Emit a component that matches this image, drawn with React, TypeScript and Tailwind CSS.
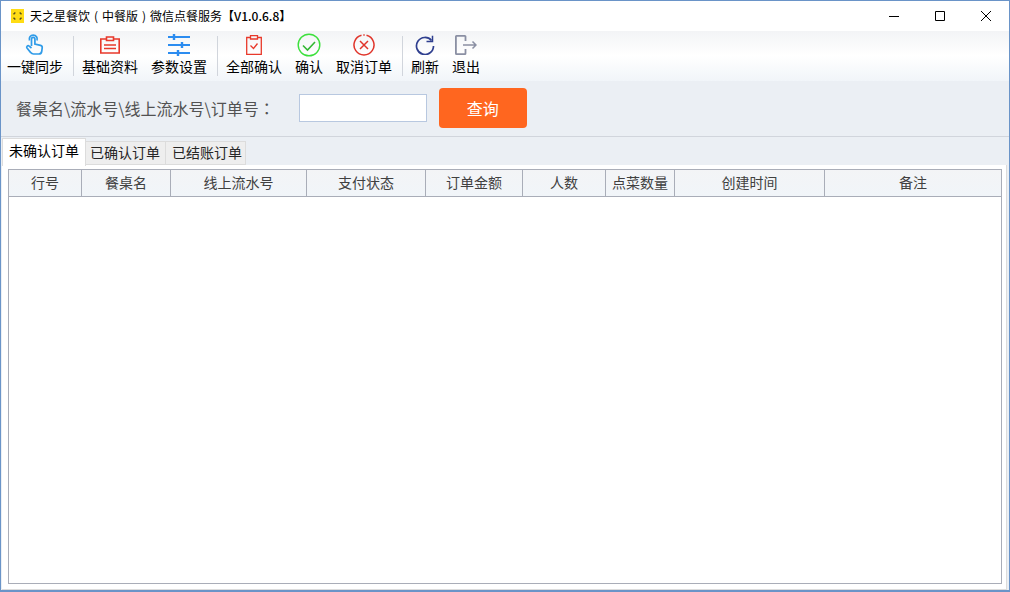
import type { ReactNode } from "react"

const headers = ["行号", "餐桌名", "线上流水号", "支付状态", "订单金额", "人数", "点菜数量", "创建时间", "备注"]

// brackets sit in the middle of a full character cell in the screenshot
function Paren({ children }: { children: ReactNode }) {
  return <span className="inline-block w-3 text-center">{children}</span>
}

function ToolButton({ icon, label }: { icon: ReactNode; label: string }) {
  return (
    <button type="button" className="flex flex-col items-center px-1.5 text-sm leading-5 text-black">
      <span className="flex h-5 w-6 items-center justify-center">{icon}</span>
      <span className="mt-px">{label}</span>
    </button>
  )
}

function Separator() {
  return <div className="mr-px mt-px h-10 w-1 border-r border-gray-300" />
}

function HandIcon() {
  return (
    <svg width="20" height="22" viewBox="0 0 20 22" fill="none" stroke="#2f9be8" strokeWidth="1.700" className="shrink-0">
      <path d="M4.500 6.500a4 4 0 1 1 7.500 0" />
      <path d="M6.500 12V5a1.700 1.700 0 0 1 3.400 0v5l5.600 1.300a2.200 2.200 0 0 1 1.700 2.500l-.5 3.700a3 3 0 0 1-3 2.500H8.500a3.500 3.500 0 0 1-2.800-1.400L2 14c-1-1.500.8-3 2.200-1.800L6.500 14" />
    </svg>
  )
}

function ProfileIcon() {
  return (
    <svg width="20" height="18" viewBox="0 0 20 18" fill="none" stroke="#e8392b" strokeWidth="1.600" className="shrink-0">
      <path d="M6 3H.8v14h18.400V3H14" />
      <path d="M6.500 4.500V1h7v3.500z" />
      <path d="M4 9h12M4 12.500h12" />
    </svg>
  )
}

function SlidersIcon() {
  return (
    <svg width="22" height="22" viewBox="0 0 22 22" fill="none" stroke="#2b8cf0" strokeWidth="2.200" className="shrink-0">
      <path d="M0 3h22M0 11h22M0 19h22" />
      <path d="M6 0v6M14 8v6M10 16v6" strokeWidth="2.400" />
    </svg>
  )
}

function ClipboardCheckIcon() {
  return (
    <svg width="16" height="20" viewBox="0 0 16 20" fill="none" stroke="#e8392b" strokeWidth="1.300" className="shrink-0">
      <path d="M4.500 2.500H.7v16.800h14.600V2.500h-3.800" />
      <path d="M4.500.7h7v3.300h-7z" />
      <path d="M4.500 10.500l3 3 4-5" />
    </svg>
  )
}

function CheckCircleIcon() {
  return (
    <svg width="24" height="24" viewBox="0 0 24 24" fill="none" strokeWidth="1.400" className="shrink-0">
      <circle cx="12" cy="12" r="10.800" stroke="#3de03d" />
      <path d="M6 12.500l4.500 4.500L18 9" stroke="#34b834" strokeWidth="1.600" />
    </svg>
  )
}

function CancelIcon() {
  return (
    <svg width="22" height="22" viewBox="0 0 22 22" fill="none" stroke="#e0342a" strokeWidth="1.500" className="shrink-0">
      <path d="M13.500 1.300A10 10 0 1 1 8.500 1.300" />
      <path d="M10.300 1h1.400" />
      <path d="M7 7l8 8M15 7l-8 8" />
    </svg>
  )
}

function RefreshIcon() {
  return (
    <svg width="20" height="20" viewBox="0 0 20 20" fill="none" stroke="#2f3f8f" strokeWidth="1.700" className="shrink-0">
      <path d="M16.500 5.500A8.500 8.500 0 1 0 18.500 11" />
      <path d="M11.500 6.500h6V.8" strokeWidth="1.500" />
    </svg>
  )
}

function ExitIcon() {
  return (
    <svg width="22" height="20" viewBox="0 0 22 20" fill="none" stroke="#8a8fa3" strokeWidth="1.800" className="shrink-0">
      <path d="M10.500 6V1.500a.6.600 0 0 0-.6-.6H1.500a.6.600 0 0 0-.6.600v17a.6.600 0 0 0 .6.600h8.400a.6.600 0 0 0 .6-.6V14" />
      <path d="M8 10h13M17.500 6.500 21 10l-3.500 3.500" strokeWidth="1.500" />
    </svg>
  )
}

export default function App() {
  return (
    <div className="flex h-screen flex-col border-x border-t border-b-2 border-[#6a94c8] bg-[#ebeff4] font-['Noto_Sans_CJK_SC',sans-serif]">
      {/* Title bar */}
      <div className="flex h-7.5 shrink-0 items-center bg-white pl-2.5 text-xs text-black">
        <svg width="13" height="14" viewBox="0 0 13 14" className="mr-1.5">
          <rect width="13" height="14" fill="#ffdc14" />
          <path d="M3 5.500V4h1.500M8.500 4H10v1.500M3 8.500V10h1.500M8.500 10H10V8.500" fill="none" stroke="#222" strokeWidth="1" />
        </svg>
        <span>
          天之星餐饮<Paren>(</Paren>中餐版<Paren>)</Paren>微信点餐服务<span className="font-medium">【V1.0.6.8】</span>
        </span>
        <div className="ml-auto flex items-center gap-9 pr-4.5">
          <svg width="10" height="10" viewBox="0 0 10 10" stroke="#000">
            <path d="M0 5.500h10" />
          </svg>
          <svg width="10" height="10" viewBox="0 0 10 10" fill="none" stroke="#000">
            <path d="M.5.500h9v9h-9z" />
          </svg>
          <svg width="10" height="10" viewBox="0 0 10 10" fill="none" stroke="#000">
            <path d="M0 0l10 10M10 0 0 10" />
          </svg>
        </div>
      </div>

      {/* Toolbar */}
      <div className="flex h-[50px] shrink-0 gap-px bg-gradient-to-b from-gray-100 via-white to-slate-100 pt-1">
        <ToolButton icon={<HandIcon />} label="一键同步" />
        <Separator />
        <ToolButton icon={<ProfileIcon />} label="基础资料" />
        <ToolButton icon={<SlidersIcon />} label="参数设置" />
        <Separator />
        <ToolButton icon={<ClipboardCheckIcon />} label="全部确认" />
        <ToolButton icon={<CheckCircleIcon />} label="确认" />
        <ToolButton icon={<CancelIcon />} label="取消订单" />
        <Separator />
        <ToolButton icon={<RefreshIcon />} label="刷新" />
        <ToolButton icon={<ExitIcon />} label="退出" />
      </div>

      {/* Search */}
      <div className="flex h-14 shrink-0 items-center border-b border-gray-300 pb-0.5 pl-3.75">
        <span className="mr-6 text-base text-neutral-600">
          餐桌名\流水号\线上流水号\订单号<span className="font-['Noto_Sans_CJK_TC',sans-serif]">：</span>
        </span>
        <input type="text" className="h-7 w-32 border border-[#b8c8e0] bg-white" />
        <button type="button" className="ml-3 h-10 w-22 rounded bg-[#ff661f] text-base text-white">
          查询
        </button>
      </div>

      {/* Tabs */}
      <div className="flex h-7 shrink-0 items-end pl-px text-sm leading-5">
        <div className="relative z-10 -mb-px h-7 border-x border-t border-[#dcdcdc] bg-white px-1.5 pt-px text-black">未确认订单</div>
        <div className="h-6 w-20 border-y border-r border-[#dcdcdc] bg-[#eeeeee] pl-1 text-neutral-800">已确认订单</div>
        <div className="h-6 w-20 border-y border-r border-[#dcdcdc] bg-[#eeeeee] pl-1.5 text-neutral-800">已结账订单</div>
      </div>

      {/* Table panel */}
      <div className="ml-px mr-0.5 flex min-h-0 flex-1 flex-col border-b border-r border-[#dcdcdc] bg-white pb-1 pl-1.5 pr-1 pt-1">
        <div className="mb-px flex flex-1 flex-col border border-[#a9adb8]">
          <div className="grid h-[27px] grid-cols-[73px_89px_136px_119px_97px_83px_69px_150px_1fr] border-b border-[#a9adb8] bg-gradient-to-b from-gray-100 to-slate-100 text-sm text-neutral-700">
            {headers.map((h) => (
              <div key={h} className="flex items-center justify-center border-r border-[#a9adb8] pb-0.5 last:border-r-0">
                {h}
              </div>
            ))}
          </div>
        </div>
      </div>
    </div>
  )
}
